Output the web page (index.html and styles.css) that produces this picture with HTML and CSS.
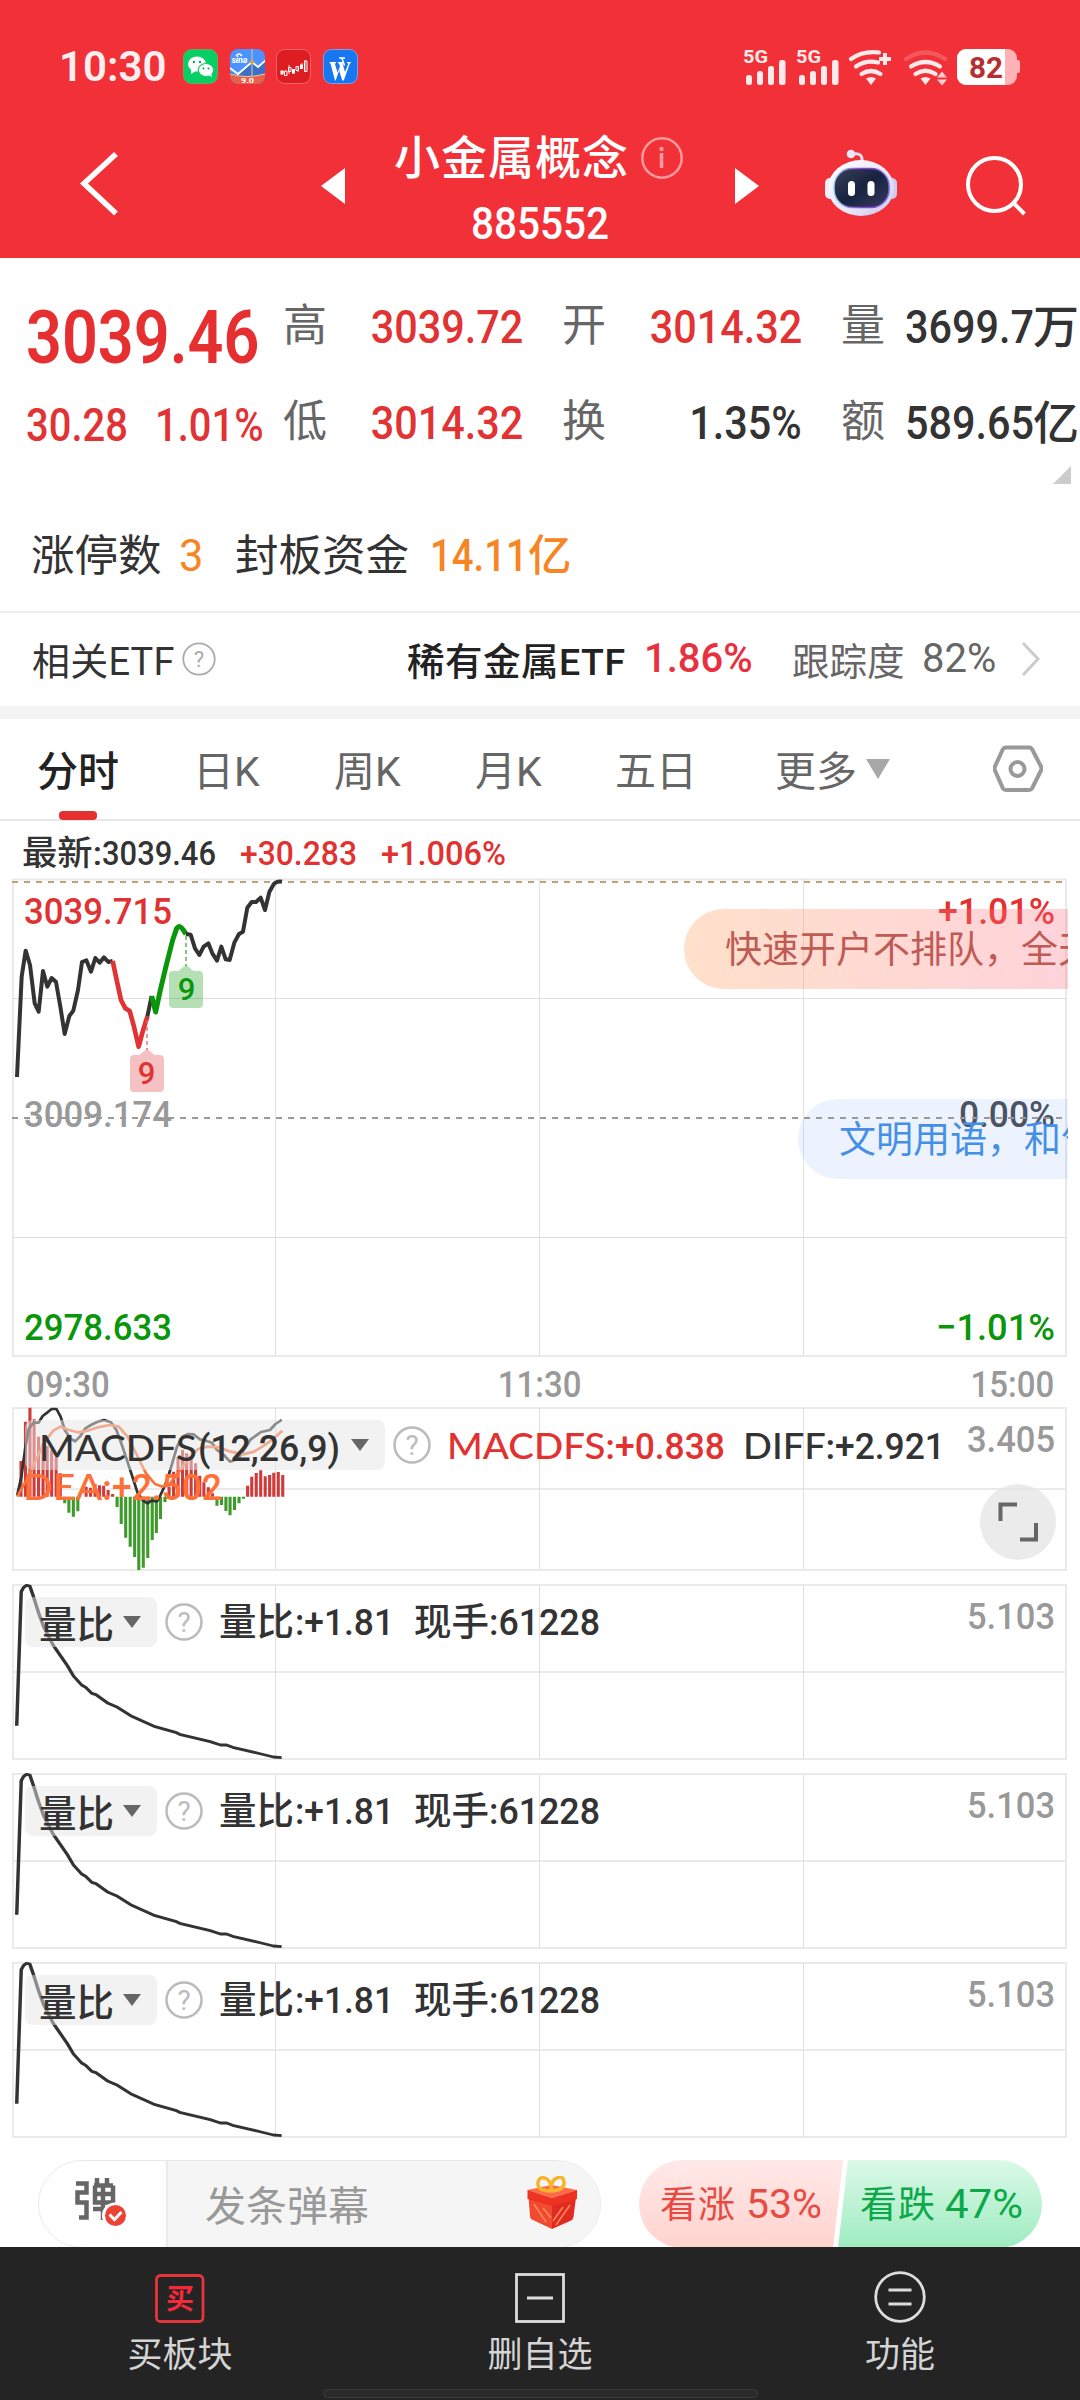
FILE: index.html
```html
<!DOCTYPE html>
<html lang="zh-CN">
<head>
<meta charset="utf-8">
<title>小金属概念 885552</title>
<link rel="stylesheet" href="styles.css">
</head>
<body>
<header class="top">
  <div class="status">
    <span class="clock">10:30</span>
    <svg class="apps" width="176" height="36" viewBox="183 49 176 36">
      <rect x="183.500" y="49.500" width="34" height="34" rx="8" fill="#07cf63" stroke="#6ba85e"/>
      <ellipse cx="197" cy="64" rx="9" ry="7.500" fill="#fff"/><path d="M191 69v5l5-3z" fill="#fff"/>
      <ellipse cx="206" cy="70" rx="7.800" ry="6.500" fill="#fff" stroke="#07cf63" stroke-width="1.200"/><path d="M208 75l4 2-1-4z" fill="#fff"/>
      <g fill="#07a850"><circle cx="194" cy="62" r="1.200"/><circle cx="200" cy="62" r="1.200"/><circle cx="203.500" cy="68.500" r="1"/><circle cx="208.500" cy="68.500" r="1"/></g>
      <clipPath id="sina"><rect x="230" y="49" width="35" height="35" rx="8"/></clipPath>
      <g clip-path="url(#sina)">
        <rect x="230" y="49" width="35" height="35" fill="#4c93ff"/>
        <path d="M230 72l7 3 15-13 6 5 7-6v24h-35z" fill="#3d70c4"/>
        <path d="M230 68l8 6 14-12 6 5 8-7" fill="none" stroke="#fff" stroke-width="1.800"/>
        <path d="M252 49v28" stroke="#c9cba6" stroke-width="1"/>
        <circle cx="252" cy="62" r="2" fill="#e6a23c"/>
        <path d="M230 74q17 5 35 0v11h-35z" fill="#e9604b"/><path d="M230 74q17 5 35 0" fill="none" stroke="#e6cfa9"/>
        <text x="231.500" y="62.500" font-size="9" font-weight="700" font-style="italic" fill="#fff" textLength="16">sina</text>
        <path d="M236 56q3-4 6 0" fill="none" stroke="#fff" stroke-width="1.500"/>
        <text x="241" y="82.500" font-size="6.500" font-weight="700" fill="#fff" textLength="13" lengthAdjust="spacingAndGlyphs">9.0</text>
      </g>
      <rect x="276.500" y="49.500" width="34" height="34" rx="8" fill="#dd1d22" stroke="#f4646a"/>
      <path d="M281 72h4M289 65v9M293 70v4M298 67v5M302 63v6M305 60v12" stroke="#fff" stroke-width="1" opacity=".8"/>
      <path d="M280.500 70.500h3v4h-3zM292 69h3v4.500h-3zM300 64.500h3V69h-3z" fill="#fff"/>
      <path d="M284.500 71h2.500v4.500h-2.500zM288.500 67.500h2.500v4h-2.500zM296 66.500h2.500v4H296zM304.500 61h2.500v10.500h-2.500z" fill="none" stroke="#fff"/>
      <rect x="323.500" y="49.500" width="34" height="34" rx="8" fill="#1677f0" stroke="#7ba2e8"/>
      <path d="M329.500 62h6.500v1.200l-1.200.3 2.700 9 2.500-6-1-3-1.200-.5v-1h6v1l-1.200.5 2.400 8.500 3.500-8.500-1.500-.5v-1h4v1l-1.200.5-6 17h-1.600l-3-10-3.600 10H335l-4.500-17-1-.5z" fill="#fff"/>
      <path d="M339 58h6M342 58.500l2.500 7" fill="none" stroke="#fff" stroke-width="1.500"/>
    </svg>
    <svg class="signals" width="280" height="40" viewBox="742 47 280 40">
      <g fill="#ffe9ea">
        <text x="743" y="63" font-size="18.500" font-weight="700" textLength="25" lengthAdjust="spacingAndGlyphs">5G</text>
        <text x="796" y="63" font-size="18.500" font-weight="700" textLength="25" lengthAdjust="spacingAndGlyphs">5G</text>
        <g id="bars"><rect x="746" y="75" width="6" height="10" rx="2.500"/><rect x="757" y="71" width="6" height="14" rx="2.500"/><rect x="768" y="66" width="6" height="19" rx="2.500"/><rect x="779" y="60" width="6.500" height="25" rx="2.500"/></g>
        <use href="#bars" x="53"/>
        <path d="M866 78.500q5-3 10 0l-5 6.500z"/>
        <path d="M920.500 78.500q5-3 10 0l-5 6.500z"/>
        <path d="M937 77.500l5-6 5 6zM937 79.500l5 6 5-6z" opacity=".85"/>
      </g>
      <g fill="none" stroke="#ffe9ea" stroke-width="4.200" stroke-linecap="round">
        <path d="M861.500 74q9.500-6 19 0M856 66.500q10-7 22-4M851 59q12-8.500 28-6.500"/>
        <path d="M915.500 74q10-6.500 20 0M911 66.500q14.500-9 29 0"/>
        <path d="M906 59q19.500-13 39 0" opacity=".22"/>
        <path d="M885 53v12M879 59h12" stroke-width="4" stroke-linecap="butt"/>
      </g>
      <rect x="957" y="49" width="60" height="36" rx="9" fill="#ffb3b6"/><rect x="1015" y="60" width="5" height="13" rx="2" fill="#ffb3b6"/>
      <path d="M966 49h39v36h-39a9 9 0 0 1-9-9V58a9 9 0 0 1 9-9z" fill="#fff"/>
      <text x="969" y="77.500" font-size="29" font-weight="700" fill="#b52f31" textLength="34" lengthAdjust="spacingAndGlyphs">82</text>
    </svg>
  </div>
  <div class="titlebar">
    <svg class="back" width="40" height="68" viewBox="79 150 40 68"><path d="M116 154L84 183.500l32 30" fill="none" stroke="#fff" stroke-width="5.500"/></svg>
    <svg class="prev" width="24" height="36" viewBox="0 0 24 36"><path d="M24 0v36L0 18z" fill="#fff"/></svg>
    <div class="name">
      <div class="name-line"><h1>小金属概念</h1>
        <svg width="42" height="42" viewBox="0 0 42 42"><circle cx="21" cy="21" r="19.700" fill="none" stroke="#ff9a9e" stroke-width="2.500"/><path d="M20.500 16v15" stroke="#ff9a9e" stroke-width="3.500"/><circle cx="20.500" cy="12" r="2.200" fill="#ff9a9e"/></svg>
      </div>
      <div class="code"><span>885552</span></div>
    </div>
    <svg class="next" width="24" height="36" viewBox="0 0 24 36"><path d="M0 0v36L24 18z" fill="#fff"/></svg>
    <svg class="bot" width="72" height="68" viewBox="825 149 72 68">
      <defs>
        <linearGradient id="shell" x2="1" y2="1"><stop offset="0" stop-color="#fff"/><stop offset=".6" stop-color="#e8e6f8"/><stop offset="1" stop-color="#c9c4ee"/></linearGradient>
        <linearGradient id="visor" x2="1" y2="1"><stop offset="0" stop-color="#3b4159"/><stop offset=".5" stop-color="#17233f"/><stop offset="1" stop-color="#3a3962"/></linearGradient>
        <linearGradient id="rim" x2="1"><stop offset="0" stop-color="#9bd8f0"/><stop offset=".5" stop-color="#8a3fd0"/><stop offset="1" stop-color="#6b62e0"/></linearGradient>
      </defs>
      <path d="M853 154q10-2 9 8" fill="none" stroke="#e1def5" stroke-width="3"/><circle cx="851" cy="154" r="4.300" fill="#ece9f8"/>
      <rect x="825" y="178" width="10" height="21" rx="5" fill="#eeeefb"/><rect x="887" y="178" width="10" height="21" rx="5" fill="#cfcbf0"/>
      <ellipse cx="861" cy="188" rx="33" ry="28" fill="url(#shell)"/>
      <rect x="834" y="168.500" width="55" height="39" rx="18" fill="url(#visor)" stroke="url(#rim)" stroke-width="1.500"/>
      <rect x="848" y="181" width="7" height="15" rx="3.500" fill="#fff"/><rect x="867.500" y="181" width="7" height="15" rx="3.500" fill="#fff"/>
    </svg>
    <svg class="search" width="62" height="62" viewBox="964 154 62 62"><circle cx="994.500" cy="184.500" r="26.500" fill="none" stroke="#fff" stroke-width="4"/><path d="M1013.500 203l11 11" stroke="#fff" stroke-width="4"/></svg>
  </div>
</header>

<section class="quote">
  <div class="grid">
    <div class="price"><span class="n">3039.46</span></div>
    <div class="lab">高</div><div class="val up"><span class="n">3039.72</span></div>
    <div class="lab">开</div><div class="val up"><span class="n">3014.32</span></div>
    <div class="lab">量</div><div class="val big"><span class="n">3699.7</span><i>万</i></div>
    <div class="chg up"><span class="n">30.28</span><span class="n">1.01%</span></div>
    <div class="lab">低</div><div class="val up"><span class="n">3014.32</span></div>
    <div class="lab">换</div><div class="val"><span class="n">1.35%</span></div>
    <div class="lab">额</div><div class="val big"><span class="n">589.65</span><i>亿</i></div>
  </div>
  <svg class="corner" width="18" height="18"><path d="M18 0v18H0z" fill="#ccc"/></svg>
  <div class="limits"><span class="l1">涨停数</span><span class="o1">3</span><span class="l2">封板资金</span><span class="o2"><span class="n">14.11</span><i>亿</i></span></div>
</section>

<section class="etf">
  <span class="etf-t">相关ETF</span>
  <svg class="q" width="34" height="34" viewBox="0 0 34 34"><circle cx="17" cy="17" r="15.700" fill="none" stroke="#aaa" stroke-width="1.800"/><text x="17" y="25" font-size="22" text-anchor="middle" fill="#aaa">?</text></svg>
  <span class="etf-n">稀有金属ETF</span>
  <span class="etf-p">1.86%</span>
  <span class="etf-k">跟踪度</span>
  <span class="etf-v">82%</span>
  <svg width="20" height="36" viewBox="0 0 20 36"><path d="M2 2l15 16L2 34" fill="none" stroke="#ccc" stroke-width="3"/></svg>
</section>

<nav class="tabs">
  <span class="on">分时</span><span>日K</span><span>周K</span><span>月K</span><span>五日</span><span>更多</span>
  <svg class="more" width="24" height="20"><path d="M0 0h24L12 20z" fill="#a8a8a8"/></svg>
  <svg class="gear" width="50" height="48" viewBox="993 746 50 48"><path d="M1006 748.500h23q2 0 3 1.500l9 17.500q1 2 0 4l-9 18q-1 1.500-3 1.500h-23q-2 0-3-1.500l-8-18q-1-2 0-4l8-17.500q1-1.500 3-1.500z" fill="none" stroke="#999" stroke-width="4"/><circle cx="1017.500" cy="770" r="7" fill="none" stroke="#999" stroke-width="4"/></svg>
</nav>

<main class="charts">
  <div class="latest">
    <svg width="1056" height="57" viewBox="12 821 1056 57">
      <g font-size="34" font-weight="500"><text x="22" y="865" fill="#333" textLength="80" lengthAdjust="spacingAndGlyphs">最新:</text>
      <text x="102" y="865" fill="#333" textLength="114" lengthAdjust="spacingAndGlyphs">3039.46</text>
      <text x="240" y="865" fill="#e13131" textLength="117" lengthAdjust="spacingAndGlyphs">+30.283</text>
      <text x="381" y="865" fill="#e13131" textLength="125" lengthAdjust="spacingAndGlyphs">+1.006%</text></g>
    </svg>
  </div>
  <svg class="price-chart" width="1056" height="480" viewBox="12 878 1056 480">
    <defs><linearGradient id="ad" gradientUnits="userSpaceOnUse" x1="684" x2="1067" y1="0" y2="0"><stop offset="0" stop-color="#ff9850"/><stop offset="1" stop-color="#ff6c84"/></linearGradient></defs>
    <g fill="none" stroke="#e9e9e9"><rect x="13" y="879.500" width="1053" height="476.500" stroke-width="2"/><path d="M275.500 879v477M539.500 879v477M803.500 879v477" stroke="#e2e2e2"/><path d="M13 998.500h1054M13 1237.500h1054" stroke="#ddd"/></g>
    <path d="M12 882H1066" stroke="#bda476" stroke-width="2" stroke-dasharray="6 6"/>
    <g font-size="37.500" font-weight="500">
      <text x="938" y="924" fill="#e62f2f" textLength="117" lengthAdjust="spacingAndGlyphs">+1.01%</text>
      <text x="959" y="1127" fill="#424448" textLength="96" lengthAdjust="spacingAndGlyphs">0.00%</text>
      <text x="936" y="1340" fill="#0a960a" textLength="119" lengthAdjust="spacingAndGlyphs">−1.01%</text>
    </g>
    <rect x="684" y="909" width="500" height="80" rx="40" fill="url(#ad)" opacity=".3"/>
    <text x="725" y="963" font-size="37" fill="#bf5a55">快速开户不排队，全天</text>
    <rect x="798" y="1099" width="500" height="80" rx="40" fill="#80affa" opacity=".15"/>
    <text x="839" y="1153" font-size="37" fill="#4590e6">文明用语，和气</text>
    <path d="M12 1118H1066" stroke="#999" stroke-width="1.800" stroke-dasharray="6 6"/>
    <g font-size="37.500" font-weight="500">
      <text x="24" y="924" fill="#e03232" textLength="148" lengthAdjust="spacingAndGlyphs">3039.715</text>
      <text x="24" y="1127" fill="#999" textLength="148" lengthAdjust="spacingAndGlyphs">3009.174</text>
      <text x="24" y="1340" fill="#0a960a" textLength="148" lengthAdjust="spacingAndGlyphs">2978.633</text>
    </g>
    <g transform="translate(0 860) scale(.33333)" fill="none" stroke="#333" stroke-width="12" stroke-linejoin="round">
      <path d="M51 651L58 500 65 350 77 272 90 315 104 430 116 455 129 333 142 380 155 354 168 366 181 440 194 522 208 468 220 452 234 390 246 306 259 301 273 335 286 294 299 308 312 292 325 306 338 303"/>
      <path d="M338 303L350 360 363 420 376 445 389 453 402 500 416 560 428 515 442 470" stroke="#e13334" stroke-width="14"/>
      <path d="M442 470L455 408"/><path d="M455 408L467 456 481 390 499 315 518 240 530 205Q539 192 550 210L558 222" stroke="#0a960a" stroke-width="15"/>
      <path d="M558 222L572 224 585 265 598 285 611 260 625 250 637 280 651 302 664 260 677 298 689 300 703 248 717 222 729 215 742 143 755 126 768 126 782 113 795 150 808 96 821 73Q830 62 846 65"/>
      <path d="M558 228V318" stroke="#43a843" stroke-width="4" stroke-dasharray="12 9"/><path d="M441 480V570" stroke="#e06a6a" stroke-width="4" stroke-dasharray="12 9"/>
      <g stroke="none"><path d="M520 333H535L558 314 581 333H596Q609 333 609 346V431Q609 444 596 444H520Q507 444 507 431V346Q507 333 520 333Z" fill="#0a960a" opacity=".3"/>
      <path d="M403 585H418L441 566 464 585H479Q492 585 492 598V683Q492 696 479 696H403Q390 696 390 683V598Q390 585 403 585Z" fill="#e13334" opacity=".3"/></g>
    </g>
    <g font-size="31" font-weight="500" text-anchor="middle"><text x="186.500" y="999.500" fill="#0a960a">9</text><text x="146.500" y="1083.500" fill="#e13334">9</text></g>
  </svg>
  <div class="times"><span class="n">09:30</span><span class="n">11:30</span><span class="n">15:00</span></div>

  <svg class="macd" width="1056" height="164" viewBox="12 1407 1056 164">
    <g fill="none" stroke="#eaeaea" stroke-width="2"><rect x="13" y="1408" width="1053" height="162"/><path d="M13 1489H1067"/><path d="M275.500 1408v162M539.500 1408v162M803.500 1408v162" stroke="#e0e0e0" stroke-width="1"/></g>
    <g transform="translate(0 1340) scale(.34439 .33333)" fill="none" stroke-width="9">
      <path stroke="#cf3a3a" d="M61 470V363M74 470V245M87 470V203M99 470V238M112 470V290M125 470V310M137 470V318M150 470V330M163 470V352M175 470V400M250 470V440M263 470V443M276 470V432M289 470V436M301 470V437M314 470V450M327 470V462M491 470V440M504 470V395M517 470V352M530 470V330M542 470V340M555 470V352M568 470V370M580 470V407M592 470V427M605 470V442M617 470V460M719 470V437M731 470V410M744 470V399M757 470V391M770 470V409M783 470V405M795 470V398M808 470V396M821 470V405"/>
      <path stroke="#3f9a2c" d="M188 470V490M200 470V518M213 470V530M226 470V514M340 470V501M352 470V552M365 470V593M378 470V620M391 470V651M403 470V690M416 470V683M429 470V654M442 470V600M454 470V579M466 470V537M479 470V486M630 470V497M643 470V495M656 470V513M668 470V526M681 470V510M694 470V490M707 470V476"/>
      <path stroke="#333" stroke-width="8" stroke-linejoin="round" d="M50 466L62 410 74 320 84 265 98 248 112 248 124 228 138 217 150 207 164 207 176 230 188 270 204 295 218 304 232 290 248 265 264 255 282 246 302 240 322 247 338 270 354 315 370 365 386 415 400 460 416 482 428 490 440 482 456 484 466 465 484 425 500 370 514 320 530 290 546 282 562 283 580 298 598 302 615 308 630 330 650 345 668 365 690 357 706 333 728 298 758 276 784 270 800 252 818 240"/>
      <path stroke="#f8733c" stroke-width="8" stroke-linejoin="round" d="M50 470L78 418 104 360 130 305 155 272 176 260 200 270 226 277 254 272 284 262 318 255 345 260 370 290 396 342 424 400 450 432 472 440 494 430 520 395 546 358 574 328 600 320 635 322 670 335 706 343 738 335 766 317 792 298 820 272"/>
    </g>
    <rect x="25" y="1420" width="360" height="50" rx="8" fill="#e5e5e5" opacity=".5"/>
    <g font-size="37.500" font-weight="500">
      <g font-family="Lato,Roboto,sans-serif"><text x="39" y="1461" fill="#333" textLength="158" lengthAdjust="spacingAndGlyphs">MACDFS</text></g><text x="198" y="1461" fill="#333" textLength="142" lengthAdjust="spacingAndGlyphs">(12,26,9)</text>
      <g font-family="Lato,Roboto,sans-serif"><text x="447" y="1459" fill="#e13131" textLength="168" lengthAdjust="spacingAndGlyphs">MACDFS:</text></g><text x="615" y="1459" fill="#e13131" textLength="110" lengthAdjust="spacingAndGlyphs">+0.838</text>
      <g font-family="Lato,Roboto,sans-serif"><text x="743" y="1459" fill="#333" textLength="92" lengthAdjust="spacingAndGlyphs">DIFF:</text></g><text x="835" y="1459" fill="#333" textLength="110" lengthAdjust="spacingAndGlyphs">+2.921</text>
      <text x="967" y="1452" fill="#999" textLength="88" lengthAdjust="spacingAndGlyphs">3.405</text>
      <g font-family="Lato,Roboto,sans-serif"><text x="23" y="1500" fill="#ff7038" textLength="89" lengthAdjust="spacingAndGlyphs">DEA:</text></g><text x="112" y="1500" fill="#ff7038" textLength="110" lengthAdjust="spacingAndGlyphs">+2.502</text>
    </g>
    <path d="M351 1439h18l-9 12z" fill="#666"/>
    <circle cx="412" cy="1445" r="17.500" fill="none" stroke="#bbb" stroke-width="2.500"/><text x="412" y="1455" font-size="28" fill="#bbb" text-anchor="middle">?</text>
    <circle cx="1018" cy="1522" r="38" fill="#e6e6e6" opacity=".8"/>
    <path d="M1000.500 1521v-16.500h16.500M1020 1539.500h16V1523" fill="none" stroke="#666" stroke-width="4"/>
  </svg>

  <svg class="sub" width="1056" height="176" viewBox="12 1584 1056 176">
    <g id="vol">
      <g fill="none" stroke="#eaeaea" stroke-width="2"><rect x="13" y="1585" width="1053" height="174"/><path d="M13 1672H1067"/><path d="M275.500 1585v174M539.500 1585v174M803.500 1585v174" stroke="#e0e0e0" stroke-width="1"/></g>
      <path transform="translate(0 1570) scale(.40816 .33333)" fill="none" stroke="#333" stroke-width="8.500" stroke-linejoin="round" d="M41 467L52 65 58 52 65 46 73 48 82 80 95 130 107 170 130 225 165 287 180 318 200 345 210 352 225 370 235 374 265 400 285 410 320 437 380 470 430 487 440 493 515 515 540 525 555 525 570 532 640 552 670 561 690 563"/>
      <rect x="25" y="1597" width="132" height="50" rx="8" fill="#e5e5e5" opacity=".5"/>
      <g font-size="37.500" font-weight="500" fill="#333">
        <text x="39" y="1638">量比</text>
        <text x="219" y="1635">量比</text><text x="295" y="1635" textLength="99" lengthAdjust="spacingAndGlyphs">:+1.81</text>
        <text x="414" y="1635">现手</text><text x="489" y="1635" textLength="111" lengthAdjust="spacingAndGlyphs">:61228</text>
        <text x="967" y="1629" fill="#999" textLength="88" lengthAdjust="spacingAndGlyphs">5.103</text>
      </g>
      <path d="M123 1616h18l-9 12z" fill="#666"/>
      <circle cx="184" cy="1622" r="17.500" fill="none" stroke="#bbb" stroke-width="2.500"/><text x="184" y="1632" font-size="28" fill="#bbb" text-anchor="middle">?</text>
    </g>
  </svg>
  <svg class="sub" width="1056" height="176" viewBox="12 1584 1056 176"><use href="#vol"/></svg>
  <svg class="sub" width="1056" height="176" viewBox="12 1584 1056 176"><use href="#vol"/></svg>
</main>

<section class="chat">
  <div class="danmu">
    <div class="toggle">
      <svg width="52" height="52" viewBox="74 2175 52 52">
        <g fill="none" stroke="#666" stroke-width="4.500"><path d="M76 2183.500h10.500v9h-9v10h9v15H79"/><path d="M97 2178v6M107 2178v6M94 2185.500h19M95 2185.500v17h18v-17M95 2194h18M93 2209h22M103 2184v36"/></g>
        <circle cx="115" cy="2215.500" r="13" fill="#fff"/><circle cx="115.500" cy="2215.500" r="10.500" fill="#ee4237"/><path d="M109.500 2214.500l5 5 7-7.500" fill="none" stroke="#fff" stroke-width="3"/>
      </svg>
    </div>
    <div class="field"><span>发条弹幕</span>
      <svg width="50" height="54" viewBox="527 2176 50 54">
        <path d="M528 2190l24 10v29l-19-9q-3-1-3-4z" fill="#f04a30"/><path d="M577 2190l-25 10v29l18-8q3-1 3.500-4z" fill="#e02a22"/>
        <path d="M527.500 2190l24-5 25.500 5-25 8z" fill="#ff6a4a"/><path d="M527.500 2190l24.500 8 25-8v9l-25 7-24.500-7z" fill="#ee3421"/>
        <path d="M534 2204l12 18M543 2208l8 10M570 2205l-14 20M563 2207l-10 14" stroke="#ff8a55" stroke-width="1.500"/>
        <path d="M551 2191q-14 0-13-8t9-4q5 4 4 12q0-9 4-12q8-5 9 3t-13 9" fill="none" stroke="#f7b52c" stroke-width="3.500"/>
      </svg>
    </div>
  </div>
  <svg class="poll" width="404" height="88" viewBox="639 2160 404 88">
    <defs>
      <linearGradient id="pr" x2="0" y2="1"><stop offset="0" stop-color="#ffe9e8"/><stop offset="1" stop-color="#ffd3ce"/></linearGradient>
      <linearGradient id="pg" x2="0" y2="1"><stop offset="0" stop-color="#dbf9e8"/><stop offset="1" stop-color="#9eecc0"/></linearGradient>
    </defs>
    <path d="M683 2160H843L833 2248H683A44 44 0 0 1 683 2160Z" fill="url(#pr)"/>
    <path d="M848 2160H998A44 44 0 0 1 998 2248H838Z" fill="url(#pg)"/>
    <g font-size="37" fill="#e94b42"><text x="660" y="2218" textLength="75">看涨</text><text x="746" y="2218" textLength="76" lengthAdjust="spacingAndGlyphs" font-size="40">53%</text></g>
    <g font-size="37" fill="#0ca84a"><text x="860" y="2218" textLength="75">看跌</text><text x="945" y="2218" textLength="78" lengthAdjust="spacingAndGlyphs" font-size="40">47%</text></g>
  </svg>
</section>

<footer class="dock">
  <div class="item"><svg width="50" height="50" viewBox="0 0 50 50"><rect x="1.500" y="2.500" width="46.500" height="46" rx="4" fill="none" stroke="#e6363c" stroke-width="2.800"/><text x="25" y="36" font-size="28" font-weight="700" fill="#f5293a" text-anchor="middle">买</text></svg><span>买板块</span></div>
  <div class="item"><svg width="50" height="50" viewBox="0 0 50 50"><rect x="1.500" y="1.500" width="47" height="47" fill="none" stroke="#ddd" stroke-width="2.800"/><path d="M12 25h26" stroke="#ddd" stroke-width="3"/></svg><span>删自选</span></div>
  <div class="item"><svg width="52" height="52" viewBox="0 0 52 52"><circle cx="26" cy="26" r="24.300" fill="none" stroke="#ddd" stroke-width="2.800"/><path d="M14.500 19h23M14.500 33h23" stroke="#ddd" stroke-width="3"/></svg><span>功能</span></div>
  <div class="home"></div>
</footer>
</body>
</html>
```
FILE: styles.css
```css
* { box-sizing: border-box; }
body {
  margin: 0; width: 1080px; height: 2400px; overflow: hidden;
  display: flex; flex-direction: column;
  background: #fff; color: #333;
  font-family: Roboto, "Noto Sans CJK SC", sans-serif;
}
svg { display: block; flex: none; }
i { font-style: normal; }
span, div { white-space: nowrap; }
.n { display: inline-block; transform: scaleX(.88); transform-origin: 0 50%; }

.top { background: #f13037; height: 258px; flex: none; color: #fff; }
.status { height: 134px; display: flex; align-items: flex-start; padding: 47px 58px 0 59px; }
.clock { width: 124px; font-size: 42px; line-height: 40px; font-weight: 600; color: #ffeeef; }
.apps { margin-top: 2px; }
.signals { margin-left: auto; }
.titlebar { height: 124px; display: flex; align-items: flex-start; padding-left: 79px; }
.back { margin-top: 16px; }
.prev { margin: 34px 0 0 202px; }
.name { margin-left: 49px; width: 341px; }
.name-line { display: flex; align-items: center; gap: 12px; height: 48px; }
h1 { margin: 0; font-size: 46px; line-height: 48px; font-weight: 500; letter-spacing: 1px; }
.code { margin: 19px 0 0 77px; font-size: 45px; line-height: 46px; font-weight: 500; }
.code span { display: inline-block; transform: scaleX(.9); transform-origin: 0 50%; }
.next { margin-top: 34px; }
.bot { margin: 15px 0 0 66px; }
.search { margin: 20px 0 0 67px; }

.quote { height: 353px; flex: none; }
.grid {
  display: grid; grid-template: 96px 96px / 257px 44px 196px 83px 196px 83px 197px;
  padding: 20px 0 0 26px; height: 208px; align-items: center; font-size: 47px; line-height: 60px; font-weight: 500;
}
.price { font-size: 74px; color: #e62f31; font-weight: 600; padding-top: 24px; }
.price .n { transform: scaleX(.85); }
.chg { display: flex; gap: 14px; padding-top: 6px; }
.chg .n { transform: scaleX(.85); }
.chg .n:first-child { width: 115px; }
.lab { color: #666; font-size: 44px; font-weight: 400; text-align: right; }
.val { text-align: right; padding-top: 1px; }
.val .n { transform-origin: 100% 50%; }
.val.big { text-align: left; padding-left: 20px; display: flex; }
.val.big .n { width: 128px; transform-origin: 0 50%; }
.val i { font-size: 46px; }
.up { color: #e13334; }
.corner { margin-left: 1053px; }
.limits { display: flex; height: 64px; margin-top: 41px; padding-left: 31px; font-size: 43.5px; line-height: 64px; }
.l1 { width: 148px; }
.o1 { width: 56px; color: #f88524; }
.l2 { width: 195px; }
.o2 { display: flex; color: #f88524; font-weight: 500; }
.o2 .n { width: 98px; }

.etf { height: 95px; flex: none; border-top: 2px solid #eee; display: flex; align-items: center; padding-left: 32px; font-size: 37.5px; padding-bottom: 2px; }
.etf-t { width: 150px; font-size: 38px; letter-spacing: .2px; }
.etf-n { width: 237px; margin-left: 191px; font-weight: 500; color: #222; letter-spacing: .5px; }
.etf-p { width: 148px; color: #e8303f; font-weight: 500; font-size: 40px; }
.etf-k { width: 130px; color: #666; }
.etf-v { width: 99px; color: #666; font-size: 40px; }

.tabs { height: 115px; flex: none; border-top: 13px solid #f4f4f4; border-bottom: 2px solid #e8e8e8; display: flex; align-items: center; padding-left: 37px; font-size: 41px; color: #666; }
.tabs span { width: 140px; line-height: 60px; padding-top: 5px; }
.tabs span:nth-child(1) { width: 156px; }
.tabs span:nth-child(2) { width: 141px; }
.tabs span:nth-child(3) { width: 141px; }
.tabs span:nth-child(6) { width: 91px; margin-left: 20px; }
.tabs .on { color: #222; font-weight: 500; position: relative; }
.tabs .on::after { content: ""; position: absolute; left: 22px; bottom: -18px; width: 38px; height: 9px; border-radius: 4px; background: #e62f31; }
.gear { margin-left: 103px; }

.charts { padding-left: 12px; flex: none; }
.times { height: 49px; display: flex; justify-content: space-between; align-items: center; padding: 2px 26px 0 14px; color: #999; font-size: 37.5px; font-weight: 500; }
.times .n { transform-origin: 50% 50%; }
.times .n:first-child { transform-origin: 0 50%; }
.times .n:last-child { transform-origin: 100% 50%; }
.sub { margin-top: 13px; }

.chat { height: 109px; flex: none; display: flex; padding: 22px 0 0 38px; overflow: hidden; }
.danmu { width: 563px; height: 88px; border: 1px solid #e9e9e9; border-radius: 44px; display: flex; overflow: hidden; flex: none; }
.toggle { width: 129px; border-right: 2px solid #eaeaea; padding: 14px 0 0 35px; }
.field { flex: 1; background: #f5f5f5; display: flex; align-items: center; justify-content: space-between; padding: 0 23px 2px 37px; color: #999; font-size: 41px; }
.poll { margin-left: 38px; }

.dock { height: 153px; flex: none; background: #242424; color: #d4d4d4; display: grid; grid-template-columns: repeat(3, 1fr); position: relative; }
.item { display: flex; flex-direction: column; align-items: center; padding-top: 26px; font-size: 35px; line-height: 44px; gap: 11px; }
.item:nth-child(3) { padding-top: 24px; }
.home { position: absolute; left: 323px; bottom: 2px; width: 435px; height: 9px; border-radius: 5px; border: 1px solid #3a3a3a; background: #2a2a2a; }
```
